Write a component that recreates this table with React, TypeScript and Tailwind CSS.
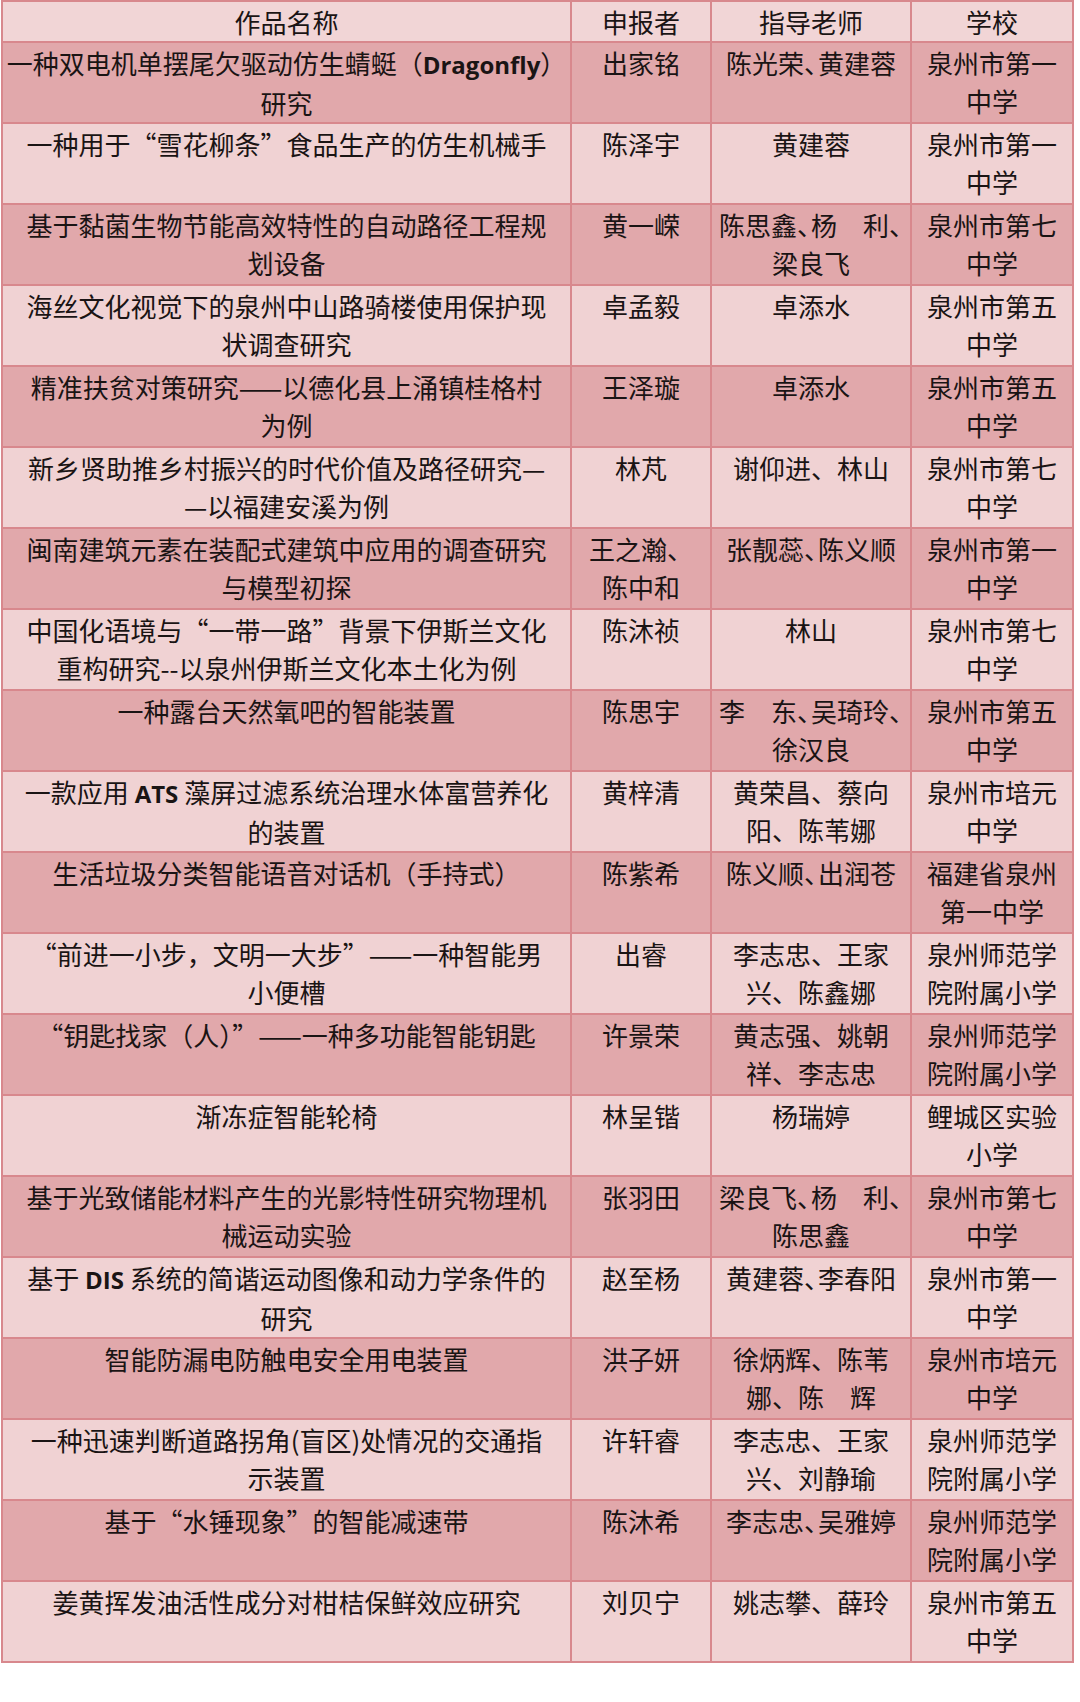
import React from "react";

type Cell = React.ReactNode[];
type Row = [Cell, Cell, Cell, Cell];

const B = ({ children }: { children: React.ReactNode }) => (
  <span className="font-['Open_Sans'] font-bold text-[24px]">{children}</span>
);

// compressed enumeration comma (as in the reference's narrow "、")
const c = (s: string): React.ReactNode => {
  const parts = s.split("、");
  return (
    <>
      {parts.map((p, i) => (
        <React.Fragment key={i}>
          {p}
          {i < parts.length - 1 && <span className="tracking-[-12px]">、</span>}
        </React.Fragment>
      ))}
    </>
  );
};

const rows: Row[] = [
  [
    [<>一种双电机单摆尾欠驱动仿生蜻蜓（<B>Dragonfly</B>）</>, "研究"],
    ["出家铭"],
    [c("陈光荣、黄建蓉")],
    ["泉州市第一", "中学"],
  ],
  [["一种用于“雪花柳条”食品生产的仿生机械手"], ["陈泽宇"], ["黄建蓉"], ["泉州市第一", "中学"]],
  [
    ["基于黏菌生物节能高效特性的自动路径工程规", "划设备"],
    ["黄一嵘"],
    [c("陈思鑫、杨　利、"), "梁良飞"],
    ["泉州市第七", "中学"],
  ],
  [["海丝文化视觉下的泉州中山路骑楼使用保护现", "状调查研究"], ["卓孟毅"], ["卓添水"], ["泉州市第五", "中学"]],
  [["精准扶贫对策研究——以德化县上涌镇桂格村", "为例"], ["王泽璇"], ["卓添水"], ["泉州市第五", "中学"]],
  [["新乡贤助推乡村振兴的时代价值及路径研究—", "—以福建安溪为例"], ["林芃"], ["谢仰进、林山"], ["泉州市第七", "中学"]],
  [
    ["闽南建筑元素在装配式建筑中应用的调查研究", "与模型初探"],
    ["王之瀚、", "陈中和"],
    [c("张靓蕊、陈义顺")],
    ["泉州市第一", "中学"],
  ],
  [
    ["中国化语境与“一带一路”背景下伊斯兰文化", "重构研究--以泉州伊斯兰文化本土化为例"],
    ["陈沐祯"],
    ["林山"],
    ["泉州市第七", "中学"],
  ],
  [["一种露台天然氧吧的智能装置"], ["陈思宇"], [c("李　东、吴琦玲、"), "徐汉良"], ["泉州市第五", "中学"]],
  [
    [<>一款应用 <B>ATS</B> 藻屏过滤系统治理水体富营养化</>, "的装置"],
    ["黄梓清"],
    ["黄荣昌、蔡向", "阳、陈苇娜"],
    ["泉州市培元", "中学"],
  ],
  [["生活垃圾分类智能语音对话机（手持式）"], ["陈紫希"], [c("陈义顺、出润苍")], ["福建省泉州", "第一中学"]],
  [
    ["“前进一小步，文明一大步”——一种智能男", "小便槽"],
    ["出睿"],
    ["李志忠、王家", "兴、陈鑫娜"],
    ["泉州师范学", "院附属小学"],
  ],
  [
    ["“钥匙找家（人）”——一种多功能智能钥匙"],
    ["许景荣"],
    ["黄志强、姚朝", "祥、李志忠"],
    ["泉州师范学", "院附属小学"],
  ],
  [["渐冻症智能轮椅"], ["林呈锴"], ["杨瑞婷"], ["鲤城区实验", "小学"]],
  [
    ["基于光致储能材料产生的光影特性研究物理机", "械运动实验"],
    ["张羽田"],
    [c("梁良飞、杨　利、"), "陈思鑫"],
    ["泉州市第七", "中学"],
  ],
  [
    [<>基于 <B>DIS</B> 系统的简谐运动图像和动力学条件的</>, "研究"],
    ["赵至杨"],
    [c("黄建蓉、李春阳")],
    ["泉州市第一", "中学"],
  ],
  [["智能防漏电防触电安全用电装置"], ["洪子妍"], ["徐炳辉、陈苇", "娜、陈　辉"], ["泉州市培元", "中学"]],
  [
    ["一种迅速判断道路拐角(盲区)处情况的交通指", "示装置"],
    ["许轩睿"],
    ["李志忠、王家", "兴、刘静瑜"],
    ["泉州师范学", "院附属小学"],
  ],
  [["基于“水锤现象”的智能减速带"], ["陈沐希"], [c("李志忠、吴雅婷")], ["泉州师范学", "院附属小学"]],
  [["姜黄挥发油活性成分对柑桔保鲜效应研究"], ["刘贝宁"], ["姚志攀、薛玲"], ["泉州市第五", "中学"]],
];

export default function App() {
  return (
    <div className="w-[1080px] min-h-[1702px] bg-white font-['Noto_Sans_CJK_SC','Noto_Sans',sans-serif] text-[#1a1414]">
      <table className="table-fixed border-collapse w-[1073px] ml-[1px] text-[26px]">
        <colgroup>
          <col className="w-[569px]" />
          <col className="w-[140px]" />
          <col className="w-[200px]" />
          <col className="w-[162px]" />
        </colgroup>
        <thead>
          <tr className="bg-[#f1d5d6] h-[41px]">
            {["作品名称", "申报者", "指导老师", "学校"].map((h) => (
              <th
                key={h}
                className="border-2 border-[#d8888d] font-normal text-center align-middle leading-[38px] p-0"
              >
                {h}
              </th>
            ))}
          </tr>
        </thead>
        <tbody>
          {rows.map((r, i) => (
            <tr key={i} className={i % 2 === 0 ? "bg-[#e1a8ab] h-[81px]" : "bg-[#f0d2d3] h-[81px]"}>
              {r.map((cell, j) => (
                <td
                  key={j}
                  className="border-2 border-[#d8888d] align-top text-center leading-[38px] px-0 pt-[1px] pb-0"
                >
                  {cell.map((l, k) => (
                    <div key={k} className="whitespace-nowrap">
                      {l}
                    </div>
                  ))}
                </td>
              ))}
            </tr>
          ))}
        </tbody>
      </table>
    </div>
  );
}
